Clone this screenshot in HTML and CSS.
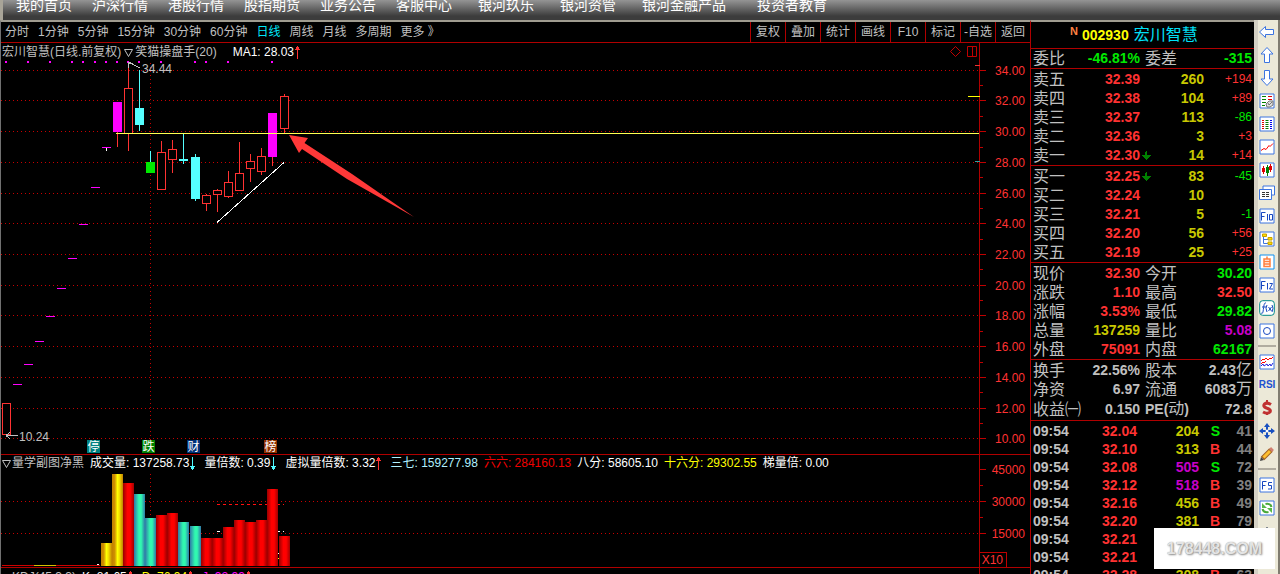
FILE: index.html
```html
<!DOCTYPE html>
<html lang="zh-CN">
<head>
<meta charset="utf-8">
<title>宏川智慧 002930</title>
<link rel="stylesheet" href="styles.css">
</head>
<body>
<svg class="defs" aria-hidden="true">
  <defs>
    <linearGradient id="gy"><stop offset="0" stop-color="#c08000"/><stop offset=".25" stop-color="#d09000"/><stop offset=".5" stop-color="#ffff00"/><stop offset=".7" stop-color="#f0d800"/><stop offset="1" stop-color="#c08000"/></linearGradient>
    <linearGradient id="gt"><stop offset="0" stop-color="#3078a8"/><stop offset=".45" stop-color="#30f8b0"/><stop offset=".65" stop-color="#30f8b0"/><stop offset="1" stop-color="#3078a8"/></linearGradient>
    <linearGradient id="gr"><stop offset="0" stop-color="#980000"/><stop offset=".4" stop-color="#ff0000"/><stop offset=".65" stop-color="#ff0000"/><stop offset="1" stop-color="#a00000"/></linearGradient>
    <symbol id="up" viewBox="0 0 5 13"><path d="M2 0h1v1h1v2h1v1H3v9H2V4H0V3h1V1h1z" fill="currentColor"/></symbol>
    <symbol id="down" viewBox="0 0 5 13"><path d="M2 0h1v9h2v1H4v2H3v1H2v-1H1v-2H0V9h2z" fill="currentColor"/></symbol>
    <symbol id="drop" viewBox="0 0 9 9"><path d="M4 0h1v4h4v1H8v1H7v1H6v1H5v1H4V8H3V7H2V6H1V5H0V4h3V1h1z" fill="#008000"/></symbol>
  </defs>
</svg>
<nav class="nav">
  <div class="nav-main"><a href="#">我的首页</a><a href="#">沪深行情</a><a href="#">港股行情</a><a href="#">股指期货</a><a href="#">业务公告</a><a href="#">客服中心</a></div>
  <div class="nav-more"><a href="#">银河玖乐</a><a href="#">银河资管</a><a href="#">银河金融产品</a><a href="#" class="edu">投资者教育</a></div>
</nav>
<div class="app">
  <main class="charts">
    <div class="bar">
      <div class="periods"><button>分时</button><button>1分钟</button><button>5分钟</button><button>15分钟</button><button>30分钟</button><button>60分钟</button><button class="on">日线</button><button>周线</button><button>月线</button><button>多周期</button><button>更多 》</button></div>
      <div class="actions"><button>复权</button><button>叠加</button><button>统计</button><button>画线</button><button>F10</button><button>标记</button><button>-自选</button><button>返回</button></div>
    </div>

    <section class="pane price">
      <div class="plot">
        <div class="head">
          <span>宏川智慧(日线.前复权)</span><svg class="tri mid" viewBox="0 0 9 9"><path d="M.5 1.500h8l-4 7z" fill="none" stroke="#c0c0c0"/></svg><span>笑猫操盘手(20)</span>
          <span class="white ma">MA1: 28.03</span><svg class="arr red"><use href="#up"/></svg>
          <svg class="marks" viewBox="0 0 28 12"><g fill="none" stroke="#c00000"><path d="M6.500 .5l5 5-5 5-5-5z"/><path d="M18.500 .5h9v10h-9zM23.500 .5v10"/></g></svg>
        </div>
        <svg class="canvas">
          <g class="grid"><line y1="9.500" y2="9.500" x2="100%"/><line y1="39.500" y2="39.500" x2="100%"/><line y1="70.500" y2="70.500" x2="100%"/><line y1="101.500" y2="101.500" x2="100%"/><line y1="132.500" y2="132.500" x2="100%"/><line y1="162.500" y2="162.500" x2="100%"/><line y1="193.500" y2="193.500" x2="100%"/><line y1="224.500" y2="224.500" x2="100%"/><line y1="254.500" y2="254.500" x2="100%"/><line y1="285.500" y2="285.500" x2="100%"/><line y1="316.500" y2="316.500" x2="100%"/><line y1="347.500" y2="347.500" x2="100%"/><line y1="377.500" y2="377.500" x2="100%"/><line x1="149.500" x2="149.500" y1="2" y2="100%"/></g>
          <g transform="translate(-1 -61)" class="crisp">
            <path fill="#f0f" d="M5 61h2v2h-2zM27 61h2v2h-2zM49 61h2v2h-2zM71 61h2v2h-2zM82 61h2v2h-2zM94 61h2v2h-2zM105 61h2v2h-2zM116 61h2v2h-2zM127 61h2v2h-2zM138 61h2v2h-2zM160 61h2v2h-2zM194 61h2v2h-2zM205 61h2v2h-2zM227 61h2v2h-2zM271 61h2v2h-2z"/>
            <path fill="#f0f" d="M13 384h9v1h-9zM24 364h9v1h-9zM35 341h9v1h-9zM46 316h9v1h-9zM57 288h9v1h-9zM68 258h9v1h-9zM79 224h9v1h-9zM91 187h9v1h-9zM102 147h9v1h-9z"/>
            <path fill="#fff" d="M106 148h1v3h-1z"/>
            <g fill="#000" stroke="#ff3232">
              <path d="M2.500 403.500h8v31h-8z"/>
              <path d="M128.500 65v86M124.500 88.500h8v45h-8z"/>
              <path d="M161.500 141v12M157.500 152.500h8v37h-8z"/>
              <path d="M172.500 140v33M168.500 149.500h8v10h-8z"/>
              <path d="M206.500 194v17M202.500 195.500h8v8h-8z"/>
              <path d="M217.500 189v23M213.500 190.500h8v4h-8z"/>
              <path d="M228.500 171v27M224.500 182.500h8v14h-8z"/>
              <path d="M239.500 142v31M235.500 173.500h8v17h-8z"/>
              <path d="M250.500 154v28M246.500 161.500h8v7h-8z"/>
              <path d="M261.500 148v27M257.500 156.500h8v15h-8z"/>
              <path d="M284.500 94v39M280.500 96.500h8v32h-8z"/>
            </g>
            <path fill="#000" d="M125 89h7v44h-7zM169 150h7v9h-7zM203 196h7v7h-7zM214 191h7v3h-7zM225 183h7v13h-7zM247 162h7v6h-7zM258 157h7v14h-7zM281 97h7v31h-7z"/>
            <path fill="#ff3232" d="M117 132h1v15h-1zM272 157h1v9h-1z"/>
            <path fill="#f0f" d="M113 102h9v30h-9zM268 113h9v44h-9z"/>
            <path fill="#5ff" d="M139 70h1v61h-1zM135 108h9v17h-9zM150 151h1v11h-1zM183 134h1v30h-1zM179 159h9v2h-9zM195 154h1v47h-1zM191 157h9v42h-9z"/>
            <path fill="#00e800" d="M146 162h9v11h-9z"/>
            <path stroke="#fff" fill="none" d="M217 222.500L284 162.500"/>
            <path stroke="#c0c0c0" fill="none" d="M128.500 62L140 68M128.500 62v6M128 63.500h5M6 435.500h12M6 435.500l4-3M6 435.500l4 3"/>
            <path fill="#008080" d="M87 440h13v13h-13z"/><path fill="#008000" d="M142 440h13v13h-13z"/><path fill="#003078" d="M187 440h13v13h-13z"/><path fill="#903000" d="M264 440h13v13h-13z"/>
          </g>
          <g transform="translate(-1 -61)">
            <path fill="#ff3838" d="M289 135L308 138L304.500 143L352 174L414 217L347 179L302 149L299 153Z"/>
            <g class="tags"><text x="87.500" y="451">停</text><text x="142.500" y="451">跌</text><text x="187.500" y="451">财</text><text x="264.500" y="451">榜</text></g>
            <g class="notes"><text x="142" y="73">34.44</text><text x="19" y="441">10.24</text></g>
          </g>
          <line class="level" x1="115" x2="100%" y1="72.500" y2="72.500"/>
        </svg>
      </div>
      <svg class="axis">
        <path class="crisp" stroke="#c00000" fill="none" d="M0 27.500h6M0 57.500h6M0 88.500h6M0 119.500h6M0 150.500h6M0 180.500h6M0 211.500h6M0 242.500h6M0 272.500h6M0 303.500h6M0 334.500h6M0 365.500h6M0 395.500h6M0 42.500h3M0 73.500h3M0 104.500h3M0 134.500h3M0 165.500h3M0 196.500h3M0 226.500h3M0 257.500h3M0 288.500h3M0 319.500h3M0 349.500h3M0 380.500h3"/>
        <text x="45" y="32">34.00</text><text x="45" y="62">32.00</text><text x="45" y="93">30.00</text><text x="45" y="124">28.00</text><text x="45" y="155">26.00</text><text x="45" y="185">24.00</text><text x="45" y="216">22.00</text><text x="45" y="247">20.00</text><text x="45" y="277">18.00</text><text x="45" y="308">16.00</text><text x="45" y="339">14.00</text><text x="45" y="370">12.00</text><text x="45" y="400">10.00</text>
      </svg>
      <svg class="pins" viewBox="0 0 12 100"><path class="crisp" d="M7 .5h5" stroke="#f03030"/><path class="crisp" d="M0 31.500h12" stroke="#ffff00"/><path class="crisp" d="M7 96.500h5" stroke="#30a0a0"/></svg>
    </section>

    <section class="pane volume">
      <div class="plot">
        <div class="head vol-head">
          <svg class="tri" viewBox="0 0 9 9"><path d="M.5 1.500h8l-4 7z" fill="none" stroke="#c0c0c0"/></svg><span>量学副图净黑</span>
          <span class="white i">成交量: 137258.73<svg class="arr cyan"><use href="#down"/></svg></span>
          <span class="white i wide">量倍数: 0.39<svg class="arr cyan"><use href="#down"/></svg></span>
          <span class="white i wide">虚拟量倍数: 3.32<svg class="arr red"><use href="#up"/></svg></span>
          <span class="pale i wide">三七: 159277.98</span><span class="hot i">六六: 284160.13</span><span class="white i">八分: 58605.10</span><span class="yellow i">十六分: 29302.55</span><span class="white i">梯量倍: 0.00</span>
        </div>
        <svg class="canvas">
          <g class="grid"><line y1="30.500" y2="30.500" x2="100%"/><line y1="62.500" y2="62.500" x2="100%"/><line x1="149.500" x2="149.500" y1="3" y2="100%"/></g>
          <g transform="translate(-1 -471)" class="crisp">
            <path stroke="#ff1010" stroke-dasharray="3 3" d="M217 504.500h67"/>
            <path fill="#d00000" d="M2 565h98v1H2z"/><path fill="#d8c000" d="M34 565h22v1H34z"/>
            <g fill="url(#gy)"><rect x="101" y="543" width="11" height="23"/><rect x="112" y="474" width="11" height="92"/></g>
            <g fill="url(#gt)"><rect x="134" y="494" width="11" height="72"/><rect x="145" y="518" width="11" height="48"/><rect x="178" y="522" width="11" height="44"/><rect x="190" y="526" width="11" height="40"/></g>
            <g fill="url(#gr)"><rect x="123" y="483" width="11" height="83"/><rect x="156" y="515" width="11" height="51"/><rect x="167" y="513" width="11" height="53"/><rect x="201" y="538" width="11" height="28"/><rect x="212" y="538" width="11" height="28"/><rect x="223" y="527" width="11" height="39"/><rect x="234" y="520" width="11" height="46"/><rect x="245" y="522" width="11" height="44"/><rect x="256" y="520" width="11" height="46"/><rect x="267" y="489" width="11" height="77"/><rect x="279" y="536" width="11" height="30"/></g>
            <path fill="#fff" d="M217 531h3v1h-3zM278 531h2v1h-2zM283 531h1v1h-1zM278 553h1v1h-1zM97 564h2v1h-2z"/>
            <path fill="#ff0" d="M278 558h1v1h-1z"/>
          </g>
        </svg>
      </div>
      <svg class="axis">
        <path class="crisp" stroke="#c00000" fill="none" d="M0 14.500h6M0 46.500h6M0 78.500h6M0 30.500h3M0 62.500h3M0 97.500h26.500v15"/>
        <text x="45" y="19">45000</text><text x="45" y="51">30000</text><text x="45" y="83">15000</text><text x="23" y="109">X10</text>
      </svg>
    </section>

    <section class="pane kdj">
      <div class="plot"><div class="head vol-head"><svg class="tri" viewBox="0 0 9 9"><path d="M.5 1.500h8l-4 7z" fill="none" stroke="#c0c0c0"/></svg><span>KDJ(45,3,3)</span><span class="white i">K: 81.65<svg class="arr red"><use href="#up"/></svg></span><span class="yellow i wide">D: 76.94<svg class="arr red"><use href="#up"/></svg></span><span class="mag i wide">J: 92.99<svg class="arr red"><use href="#up"/></svg></span></div></div>
      <div class="axis"></div>
    </section>
  </main>

  <aside class="quote">
    <h1><sup>N</sup><b>002930</b><span>宏川智慧</span></h1>
    <table class="info"><tr><th>委比</th><td class="g">-46.81%</td><th>委差</th><td class="g">-315</td></tr></table>
    <table class="book">
      <tr><th>卖五</th><td class="r">32.39</td><td></td><td class="y">260</td><td class="r">+194</td></tr>
      <tr><th>卖四</th><td class="r">32.38</td><td></td><td class="y">104</td><td class="r">+89</td></tr>
      <tr><th>卖三</th><td class="r">32.37</td><td></td><td class="y">113</td><td class="g">-86</td></tr>
      <tr><th>卖二</th><td class="r">32.36</td><td></td><td class="y">3</td><td class="r">+3</td></tr>
      <tr><th>卖一</th><td class="r">32.30</td><td><svg class="drop"><use href="#drop"/></svg></td><td class="y">14</td><td class="r">+14</td></tr>
    </table>
    <table class="book">
      <tr><th>买一</th><td class="r">32.25</td><td><svg class="drop"><use href="#drop"/></svg></td><td class="y">83</td><td class="g">-45</td></tr>
      <tr><th>买二</th><td class="r">32.24</td><td></td><td class="y">10</td><td></td></tr>
      <tr><th>买三</th><td class="r">32.21</td><td></td><td class="y">5</td><td class="g">-1</td></tr>
      <tr><th>买四</th><td class="r">32.20</td><td></td><td class="y">56</td><td class="r">+56</td></tr>
      <tr><th>买五</th><td class="r">32.19</td><td></td><td class="y">25</td><td class="r">+25</td></tr>
    </table>
    <table class="info">
      <tr><th>现价</th><td class="r">32.30</td><th>今开</th><td class="g">30.20</td></tr>
      <tr><th>涨跌</th><td class="r">1.10</td><th>最高</th><td class="r">32.50</td></tr>
      <tr><th>涨幅</th><td class="r">3.53%</td><th>最低</th><td class="g">29.82</td></tr>
      <tr><th>总量</th><td class="y">137259</td><th>量比</th><td class="m">5.08</td></tr>
      <tr><th>外盘</th><td class="r">75091</td><th>内盘</th><td class="g">62167</td></tr>
    </table>
    <table class="info basics">
      <tr><th>换手</th><td>22.56%</td><th>股本</th><td>2.43<i>亿</i></td></tr>
      <tr><th>净资</th><td>6.97</td><th>流通</th><td>6083<i>万</i></td></tr>
      <tr><th>收益㈠</th><td>0.150</td><th><b>PE(</b>动<b>)</b></th><td>72.8</td></tr>
    </table>
    <table class="ticks">
      <tr><td>09:54</td><td class="r">32.04</td><td class="y">204</td><td class="g">S</td><td>41</td></tr>
      <tr><td>09:54</td><td class="r">32.10</td><td class="y">313</td><td class="r">B</td><td>44</td></tr>
      <tr><td>09:54</td><td class="r">32.08</td><td class="m">505</td><td class="g">S</td><td>72</td></tr>
      <tr><td>09:54</td><td class="r">32.12</td><td class="m">518</td><td class="r">B</td><td>39</td></tr>
      <tr><td>09:54</td><td class="r">32.16</td><td class="y">456</td><td class="r">B</td><td>49</td></tr>
      <tr><td>09:54</td><td class="r">32.20</td><td class="y">381</td><td class="r">B</td><td>79</td></tr>
      <tr><td>09:54</td><td class="r">32.21</td><td></td><td></td><td></td></tr>
      <tr><td>09:54</td><td class="r">32.21</td><td></td><td></td><td></td></tr>
      <tr><td>09:54</td><td class="r">32.28</td><td class="y">308</td><td class="r">B</td><td>63</td></tr>
    </table>
  </aside>

  <div class="tools">
    <button aria-label="后退"><svg viewBox="0 0 16 16"><path d="M.5 8L6.500 2.500V5.500h8v5h-8v3z" fill="#fff" stroke="#3c74e0"/></svg></button>
    <button aria-label="上移"><svg viewBox="0 0 16 16"><path d="M8 .5L14 7H10.500v8.500h-5V7H2z" fill="#fff" stroke="#3c74e0"/></svg></button>
    <button aria-label="下移"><svg viewBox="0 0 16 16"><path d="M8 15.500L2 9h3.500V.5h5V9H14z" fill="#fff" stroke="#3c74e0"/></svg></button>
    <button aria-label="报价"><svg viewBox="0 0 16 16"><path class="fr" d="M1 1h14v14H1z"/><path d="M3 3.500h4M3 6.500h4M3 9.500h4M3 12.500h3" stroke="#008000"/><path d="M9 3.500h4M9 6.500h4" stroke="#e00000"/><path d="M7 11l3-3h4v4l-3 2H8z" fill="#ddd" stroke="#777"/><path d="M9 10l1 2 3-3" fill="none" stroke="#777"/></svg></button>
    <button aria-label="列表"><svg viewBox="0 0 16 16"><path class="fr" d="M1 1h14v14H1z"/><path d="M3 4.500h2M3 6.500h2M3 8.500h2M3 10.500h2M3 12.500h2" stroke="#e00000"/><path d="M6.500 4.500h3M6.500 6.500h3M6.500 8.500h3M6.500 10.500h3M6.500 12.500h3" stroke="#008000"/><path d="M11 4.500h2M11 6.500h2M11 8.500h2M11 10.500h2M11 12.500h2" stroke="#00e"/></svg></button>
    <button aria-label="分时图"><svg viewBox="0 0 16 16"><path class="fr" d="M1 1h14v14H1z"/><path d="M2 11.500l3-2 2 1 3-4 1 1 3-3" fill="none" stroke="#f00"/></svg></button>
    <button aria-label="K线图"><svg viewBox="0 0 16 16"><path class="fr" d="M1 1h14v14H1z"/><path d="M4.500 4v8M11.500 2v8" stroke="#e00000"/><path d="M3 6h3v4H3zM10 4h3v4h-3z" fill="#e00000"/><path d="M8.500 3v11" stroke="#008000"/><path d="M7 5h3v6H7z" fill="#008000"/></svg></button>
    <button aria-label="多窗口"><svg viewBox="0 0 16 16"><path class="fr" d="M4 1h11.500v9H4z"/><path class="fr" d="M.5 4.500h12v10H.5z"/><path d="M3 7.500h3M7 7.500h3M3 9.500h3M7 9.500h3M3 11.500h3M7 11.500h3" stroke="#333"/></svg></button>
    <button aria-label="F10"><svg viewBox="0 0 16 16"><path class="fr" d="M1 1h14v14H1z"/><path class="ink" d="M2.500 12.500V4.500H6.500M2.500 8.500H5.500M8.500 6v6.500M10.500 6.500h3v5.500h-3z"/></svg></button>
    <button aria-label="板块"><svg viewBox="0 0 16 16"><path class="fr" d="M1 1h14v14H1z"/><path d="M4.500 5v7.500H9M4.500 8.500H9" fill="none" stroke="#3c74e0"/><path d="M3.500 3h4v2.500h-4zM9 6.500h4V9H9zM9 11h4v2.500H9z" fill="#fd0" stroke="#c8a000"/></svg></button>
    <button aria-label="自选"><svg viewBox="0 0 16 16"><path d="M1 1h14v14H1z" fill="#fff" stroke="#1090f0"/><path d="M8 2.500v2M5 5h6v7.500H5zM5 7.500h6M5 10h6" fill="none" stroke="#ff8040" stroke-width="1.500"/></svg></button>
    <button aria-label="F12"><svg viewBox="0 0 16 16"><path class="fr" d="M1 1h14v14H1z"/><path class="ink" d="M2.500 12.500V4.500H6.500M2.500 8.500H5.500M8.500 6v6.500M10.500 6.500h3l-3 5.500h3.500"/></svg></button>
    <button aria-label="公式"><svg viewBox="0 0 16 16"><rect x=".7" y=".7" width="14.600" height="14.600" rx="3" fill="#fff" stroke="#088"/><path class="ink" d="M7 3c-2-.5-2 2-3 9-.3 1.500-1 1.500-2 1M3 7h4M8 5q-2 3 0 7M9.500 7l3 4M12.500 7l-3 4M13 5q2 3 0 7"/></svg></button>
    <button aria-label="圆"><svg viewBox="0 0 16 16"><path class="fr" d="M1 1h14v14H1z"/><circle class="ink" cx="8" cy="8" r="3.500"/></svg></button>
    <hr>
    <button aria-label="叠加走势"><svg viewBox="0 0 16 16"><path class="fr" d="M1 1h14v14H1z"/><path d="M2 7l2-2 1 1 2-2 2 2 2-2 1 1 2-2" fill="none" stroke="#f00"/><path d="M2 10l2-2 1 1 2-2" fill="none" stroke="#f00"/><path d="M2 12l2-2 1 2 3-2 1 2 2-2 1 2 2-3" fill="none" stroke="#22d"/></svg></button>
    <button class="rsi">RSI</button>
    <button aria-label="资金"><svg viewBox="0 0 16 16"><path d="M12 4.500Q8 2 5.500 4 3.500 6.500 7.500 8q5 1.500 3.500 4-2.500 2.500-7 0" fill="none" stroke="#c03030" stroke-width="3"/><path d="M8 0v3M8 13v2" stroke="#c03030" stroke-width="2"/></svg></button>
    <button aria-label="移动"><svg viewBox="0 0 16 16"><path d="M8 0l3 4H9v3h3V5l4 3-4 3V9H9v3h2l-3 4-3-4h2V9H4v2L0 8l4-3v2h3V4H5z" fill="#1850c0"/><circle cx="8" cy="8" r="1.500" fill="#fff"/></svg></button>
    <button aria-label="画笔"><svg viewBox="0 0 16 16"><path d="M3.500 12.500L12 4" stroke="#a06020" stroke-width="5"/><path d="M4.500 11.500L11 5" stroke="#ffc030" stroke-width="3"/><path d="M11.500 4.500l2-2" stroke="#d08070" stroke-width="4"/><path d="M1 15l1-4 3 3z" fill="#444"/></svg></button>
    <hr>
    <button aria-label="F5"><svg viewBox="0 0 16 16"><path class="fr" d="M1 1h14v14H1z"/><path class="ink" d="M3.500 12.500V4.500H7.500M3.500 8.500H6.500M13 5.500h-3.500V8.500h3v3.500h-3.500"/></svg></button>
    <button aria-label="刷新"><svg viewBox="0 0 16 16"><path class="fr" d="M1 1h14v14H1z"/><path d="M12.500 7q-1-4-6-3M3.500 9q1 4 6 3" fill="none" stroke="#48a838" stroke-width="2"/><path d="M3 3v5h5zM13 13V8H8z" fill="#58b848"/></svg></button>
    <button aria-label="上翻"><svg viewBox="0 0 16 16"><path d="M6 6l2-2 2 2z" fill="#124"/></svg></button>
  </div>
</div>
<div class="stamp">178448.COM</div>
</body>
</html>
```
FILE: styles.css
```css
* { box-sizing: border-box; }
body {
  margin: 0;
  height: 100vh;
  overflow: hidden;
  display: flex;
  flex-direction: column;
  background: #000;
  color: #c0c0c0;
  font: 12px/18px "Liberation Sans", "Noto Sans CJK SC", sans-serif;
}
button {
  margin: 0;
  padding: 0;
  border: 0;
  background: none;
  color: inherit;
  font: inherit;
  white-space: nowrap;
}
.defs { position: absolute; width: 0; height: 0; }
.crisp { shape-rendering: crispEdges; }

.nav {
  flex: none;
  height: 20px;
  padding: 0 0 10px 13px;
  display: flex;
  align-items: center;
  gap: 26px;
  border-left: 3px solid #a8a498;
  background: linear-gradient(#949494, #3c3c3c 16px);
  font-size: 14px;
  overflow: hidden;
}
.nav a { color: #fff; text-decoration: none; white-space: nowrap; }
.nav-main, .nav-more { display: flex; gap: 20px; }
.nav-more { gap: 26px; }
.edu { padding-left: 5px; }

.app { flex: 1; min-height: 0; display: flex; }
.charts {
  flex: 1;
  min-width: 0;
  display: flex;
  flex-direction: column;
  border-top: 2px solid #a09c90;
  border-left: 1px solid #707070;
}
.bar {
  height: 21px;
  display: flex;
  justify-content: space-between;
  border-bottom: 1px solid #b00000;
}
.periods { display: flex; gap: 9px; padding-left: 4px; }
.periods .on { color: #00e8f8; }
.actions { display: flex; }
.actions button { width: 35px; border-left: 1px solid #b00000; }

.pane { position: relative; display: flex; border-bottom: 1px solid #b00000; }
.price { flex: 1; min-height: 0; }
.volume { height: 113px; }
.kdj { height: 6px; border: 0; overflow: hidden; }
.plot { flex: 1; min-width: 0; display: flex; flex-direction: column; }
.head { height: 18px; padding-left: 1px; display: flex; align-items: center; white-space: nowrap; }
.vol-head { height: 16px; }
.kdj .head { height: 18px; flex: none; }
.canvas { flex: 1; min-height: 0; width: 100%; display: block; }
.axis { width: 51px; height: 100%; border-left: 1px solid #b00000; }
.axis text { fill: #ff3232; text-anchor: end; }
.grid line { stroke: #c80000; stroke-dasharray: 1 3; shape-rendering: crispEdges; }
.level { stroke: #ffff50; shape-rendering: crispEdges; }
.tags text { fill: #fff; }
.notes text { fill: #c0c0c0; }
.tri { width: 9px; height: 9px; margin: 0 1px 0 0; }
.mid { margin: 0 2px 0 3px; }
.arr { width: 5px; height: 13px; margin-left: 1px; vertical-align: -3px; }
.ma { margin-left: 16px; }
.marks { width: 28px; height: 12px; margin: 0 2px 0 auto; }
.pins { position: absolute; right: 50px; top: 22px; width: 12px; height: 100px; }
.i { margin-left: 6px; }
.wide { margin-left: 9px; }
.white { color: #fff; }
.cyan { color: #50f8ff; }
.pale { color: #b0f0ff; }
.hot { color: #f00000; }
.red { color: #ff3232; }
.yellow { color: #ff0; }
.mag { color: #f0f; }

.quote {
  flex: none;
  width: 224px;
  overflow: hidden;
  border-top: 2px solid #a09c90;
  border-left: 1px solid #b00000;
}
.quote h1 {
  margin: 0;
  height: 26px;
  padding-left: 39px;
  display: flex;
  align-items: center;
  font-size: 16px;
  font-weight: 400;
  color: #00e0f8;
}
.quote h1 b { font-size: 14px; color: #ff0; margin: 0 5px 0 4px; }
.quote sup { font-size: 11px; line-height: 11px; font-weight: 700; color: #ff8040; margin-bottom: 8px; }
.quote table {
  width: 100%;
  table-layout: fixed;
  border-collapse: separate;
  border-spacing: 0;
  border-top: 1px solid #b00000;
  padding-top: 1px;
  font-size: 14px;
  font-weight: 700;
}
.quote table:first-of-type { padding-top: 0; }
.quote .basics { padding-bottom: 1px; }
.quote tr { height: 19px; }
.quote td, .quote th { padding: 0 2px 0 0; line-height: 19px; text-align: right; white-space: nowrap; }
.quote th { padding: 0 0 0 2px; text-align: left; font-size: 16px; font-weight: 400; }
.quote th b { font-size: 14px; }
.quote td i { font-size: 16px; font-style: normal; font-weight: 400; line-height: 1; }
.info th:nth-child(1), .book th { width: 42px; }
.info td:nth-child(2), .book td:nth-child(2) { width: 67px; padding: 0; }
.info th:nth-child(3) { width: 47px; padding-left: 5px; }
.book td:nth-child(3) { width: 14px; text-align: left; padding-left: 2px; }
.book td:nth-child(4) { width: 50px; padding: 0; }
.book td:nth-child(5) { font-size: 12px; font-weight: 400; }
.drop { width: 9px; height: 9px; display: block; }
.quote .ticks tr { height: 18px; }
.quote .ticks td { line-height: 18px; }
.quote .ticks td:nth-child(1) { width: 42px; text-align: left; padding: 0 0 0 2px; }
.ticks td:nth-child(2) { width: 66px; }
.ticks td:nth-child(3) { width: 62px; }
.ticks td:nth-child(4) { width: 21px; }
.ticks td:nth-child(5) { color: #808080; }
.r { color: #ff3232; }
.g { color: #00e800; }
.y { color: #c8c800; }
.m { color: #c800c8; }

.tools {
  flex: none;
  width: 26px;
  display: flex;
  flex-direction: column;
  align-items: center;
  overflow: hidden;
  background: #ece9d8;
  border-left: 4px solid #d4d0c4;
  border-right: 2px solid #807c70;
  padding-right: 2px;
}
.tools button { flex: none; width: 16px; height: 23px; }
.tools svg { display: block; width: 16px; height: 16px; }
.tools hr { flex: none; width: 18px; height: 2px; margin: 3px 0; border: 0; background: #b0aca0; }
.tools .rsi { width: 18px; text-align: center; font-size: 10px; font-weight: 700; color: #2050d0; }
.fr { fill: #fff; stroke: #3c74e0; }
.ink { fill: none; stroke: #1848c0; }

.stamp {
  position: absolute;
  right: 5px;
  bottom: 5px;
  padding: 0 13px;
  background: #fff;
  color: #e4e4e4;
  font: 700 16px/41px "Liberation Sans", sans-serif;
  text-shadow: 1px 1px 2px #888, 0 0 1px #999;
}
```
